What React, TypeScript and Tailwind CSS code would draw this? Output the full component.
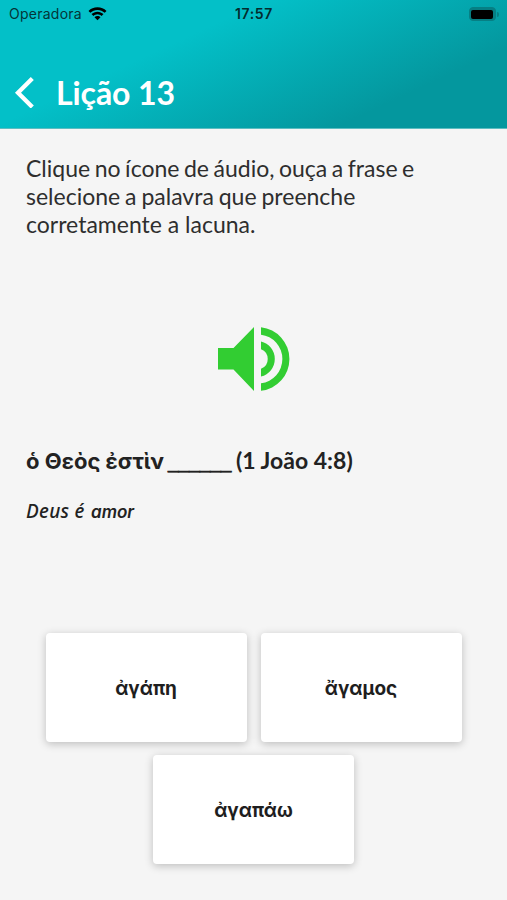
import React from "react";

const rows = [["ἀγάπη", "ἄγαμος"], ["ἀγαπάω"]];

const StatusBar = () => (
  <div className="grid h-7 grid-cols-3 items-center pl-[9px] pr-[8px] font-['Inter',sans-serif] text-black">
    <div className="flex items-center gap-[6px]">
      <span className="text-[14px] leading-none tracking-[0.25px] text-[#043537]">Operadora</span>
      <svg width="19" height="14" viewBox="0 0 19 14" fill="currentColor">
        <path d="M9.5 0.3C13 0.3 16.2 1.6 18.5 3.9L16.7 5.8C14.8 4 12.3 2.9 9.5 2.9S4.2 4 2.3 5.8L0.5 3.9C2.8 1.6 6 0.3 9.5 0.3Z" />
        <path d="M9.5 4.7C11.8 4.7 13.9 5.6 15.5 7.1L13.6 9C12.5 8 11.1 7.3 9.5 7.3S6.5 8 5.4 9L3.5 7.1C5.1 5.6 7.2 4.7 9.5 4.7Z" />
        <path d="M9.5 9C10.7 9 11.7 9.5 12.5 10.2L9.5 13.3L6.5 10.2C7.3 9.5 8.3 9 9.5 9Z" />
      </svg>
    </div>
    <span className="text-center text-[14px] font-semibold leading-none tracking-[0.6px] text-[#042c2e]">17:57</span>
    <div className="flex items-center justify-end gap-[1px]">
      <div className="h-[14px] w-[27px] rounded-[4px] border border-[#067f84] bg-[#067f84] p-[1.5px]">
        <div className="h-full w-full rounded-[2px] bg-black" />
      </div>
      <div className="h-[5px] w-[2px] rounded-r-full bg-[#067f84]" />
    </div>
  </div>
);

const Header = () => (
  <header className="h-[129px] border-b border-[#5dbdc1] bg-[linear-gradient(155deg,#03c0c8_0%,#03c0c8_34%,#04979e_78%,#04979e_100%)]">
    <StatusBar />
    <div className="flex items-start pl-[14px] pt-[46px]">
      <svg width="21" height="34" viewBox="0 0 21 34" fill="none" stroke="white" strokeWidth="4.3">
        <path d="M18.3 4.5L4 18.7L18.3 33" />
      </svg>
      <h1 className="-mt-px ml-[21px] font-['Lato',sans-serif] text-[32px] font-bold leading-[40px] tracking-[-0.1px] text-white">
        Lição 13
      </h1>
    </div>
  </header>
);

const OptionCard = ({ word }: { word: string }) => (
  <button className="flex h-[109px] w-[201px] items-center justify-center rounded-[4px] bg-white pt-[3px] font-['Inter',sans-serif] text-[19px] font-bold text-[#1e1e1e] shadow-[0_2px_8px_rgba(0,0,0,0.23)]">
    {word}
  </button>
);

export default function App() {
  return (
    <div className="flex h-[900px] w-[507px] flex-col overflow-hidden bg-[#f5f5f5] font-['Lato',sans-serif] text-[#222]">
      <Header />
      <main className="flex flex-col">
        <p className="ml-[26px] mt-[25px] flex h-[84px] flex-col whitespace-nowrap text-[23px] leading-[28px] text-[#2e2e2e]">
          <span className="[word-spacing:-1.35px]">Clique no ícone de áudio, ouça a frase e</span>
          <span className="[word-spacing:-1px]">selecione a palavra que preenche</span>
          <span>corretamente a lacuna.</span>
        </p>
        <button className="ml-[218px] mt-[89px] h-[64px] w-[72px]" aria-label="Ouvir frase">
          <svg width="72" height="64" viewBox="0 0 72 64" fill="#32cd32">
            <path d="M0 21H15.5L36 0V64L15.5 42.5H0Z" />
            <path d="M43 0.2A32 32 0 0 1 43 63.8V56.3A24.5 24.5 0 0 0 43 7.7Z" />
            <path d="M43 14.5A18 18 0 0 1 43 49.5V41.8A10.5 10.5 0 0 0 43 22.2Z" />
          </svg>
        </button>
        <h2 className="ml-[26px] mt-[54px] flex h-[30px] items-baseline whitespace-nowrap text-[23px] font-bold leading-[30px]">
          <span className="w-[142px] font-['Inter',sans-serif] text-[22px]">ὁ Θεὸς ἐστὶν</span>
          <span className="mr-[5px] w-[63px] -translate-y-px font-['Liberation_Sans',sans-serif] text-[19px] font-normal [-webkit-text-stroke:0.7px_#222]">
            ______
          </span>
          <span>(1 João 4:8)</span>
        </h2>
        <p className="ml-[26px] mt-[24px] flex h-[24px] items-baseline whitespace-nowrap italic leading-[24px]">
          <span className="w-[65px] font-['Noto_Sans',sans-serif] text-[19px] font-medium tracking-[0.3px]">Deus é</span>
          <span className="font-['Inter',sans-serif] text-[17px] font-semibold">amor</span>
        </p>
        <div className="mt-[110px] flex flex-col gap-[13px]">
          {rows.map((row) => (
            <div key={row[0]} className="flex justify-center gap-[14px]">
              {row.map((word) => (
                <OptionCard key={word} word={word} />
              ))}
            </div>
          ))}
        </div>
      </main>
    </div>
  );
}
